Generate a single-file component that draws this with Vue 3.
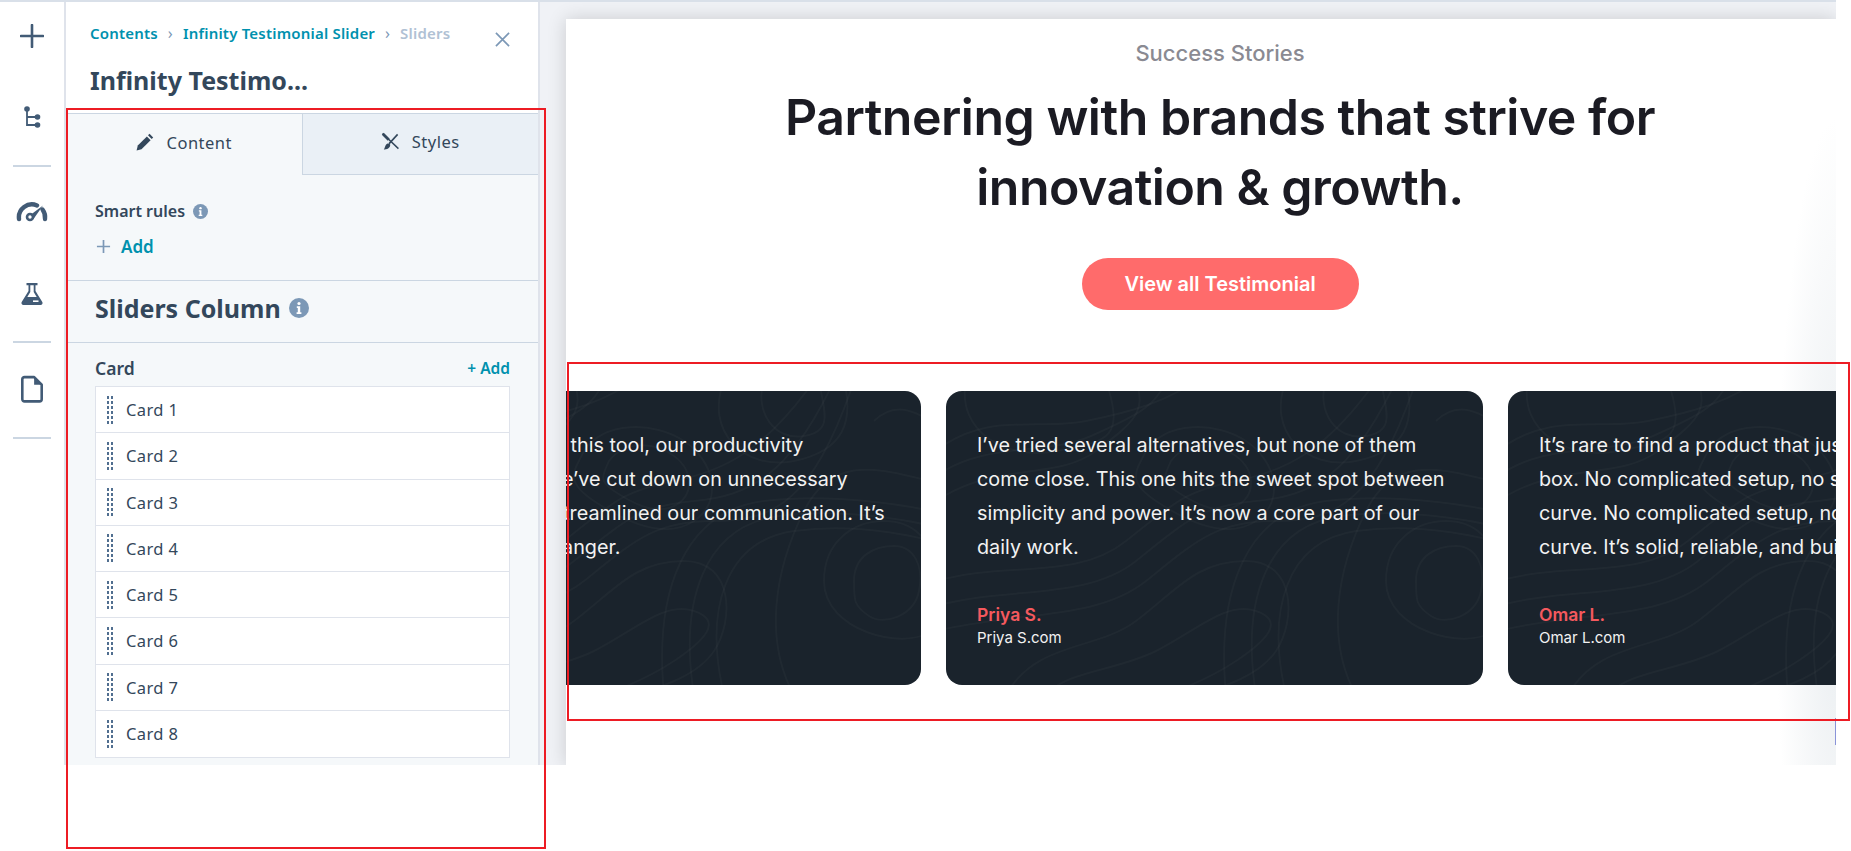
<template>
  <div class="page">
    <div class="workspace">
      <aside class="rail">
        <svg class="rail-icon" viewBox="0 0 24 24"><path d="M12 1v22M1 12h22" fill="none" stroke="#425b76" stroke-width="2.6" stroke-linecap="round" /></svg>
        <svg class="rail-icon tree" viewBox="0 0 24 24">
          <path d="M7 2v17h10M7 11h10" fill="none" stroke="#425b76" stroke-width="1.8" />
          <circle cx="7" cy="3" r="2.8" fill="#425b76" />
          <circle cx="17.5" cy="11" r="2.8" fill="#425b76" />
          <circle cx="17.5" cy="19" r="2.8" fill="#425b76" />
        </svg>
        <div class="rail-line"></div>
        <svg class="rail-icon gauge" viewBox="0 0 32 24">
          <path d="M3 19A13 13 0 0 1 21 5.500" fill="none" stroke="#425b76" stroke-width="4.400" stroke-linecap="round" />
          <path d="M26.500 9.500A13 13 0 0 1 29 19" fill="none" stroke="#425b76" stroke-width="4.400" stroke-linecap="round" />
          <circle cx="14" cy="17" r="3" fill="none" stroke="#425b76" stroke-width="2.600" />
          <path d="M15 14.500 27 5.500 17.500 19z" fill="#425b76" />
        </svg>
        <svg class="rail-icon flask" viewBox="0 0 24 24">
          <path d="M6.500 1h11v2.200h-2V9l6.800 11a2 2 0 0 1-1.800 3H3.500a2 2 0 0 1-1.800-3L8.500 9V3.200h-2z" fill="#425b76" />
          <path d="M10.300 3.200V10l-3 5h9.400l-3-5V3.200z" fill="#fff" />
          <rect x="13" y="18.400" width="5.500" height="1.600" fill="#fff" />
        </svg>
        <div class="rail-line"></div>
        <svg class="rail-icon file" viewBox="0 0 24 26">
          <path d="M5 2h9l7 7v13.500a2 2 0 0 1-2 2H5a2 2 0 0 1-2-2V4a2 2 0 0 1 2-2z" fill="none" stroke="#425b76" stroke-width="2.400" stroke-linejoin="round" />
          <path d="M14 2v7h7z" fill="#425b76" />
        </svg>
        <div class="rail-line"></div>
      </aside>

      <section class="panel">
        <header class="panel-head">
          <div class="crumbs">
            <span class="crumb">Contents</span>
            <span class="chev">›</span>
            <span class="crumb">Infinity Testimonial Slider</span>
            <span class="chev">›</span>
            <span class="crumb off">Sliders</span>
            <svg class="close" viewBox="0 0 16 16"><path d="M1 1l14 14M15 1 1 15" stroke="#7c98b6" stroke-width="1.800" /></svg>
          </div>
          <h2 class="panel-title">Infinity Testimo...</h2>
        </header>

        <div class="tabs">
          <div class="tab active">
            <svg class="tab-icon" viewBox="0 0 24 24">
              <path d="M2 22l1.500-6.200L15 4.300 19.700 9 8.200 20.500z" fill="#33475b" />
              <path d="M16.400 2.900 18.300 1 23 5.700l-1.900 1.900z" fill="#33475b" />
            </svg>
            <span>Content</span>
          </div>
          <div class="tab">
            <svg class="tab-icon" viewBox="0 0 24 24">
              <path d="M2 2l20 19" stroke="#33475b" stroke-width="1.800" fill="none" />
              <path d="M1 3.500 3.500 1 11 8.500 8.500 11z" fill="#33475b" />
              <path d="M21 3 10 15" stroke="#33475b" stroke-width="2" fill="none" />
              <path d="M11.500 15.500c.8 3.500-2.500 7-8 6.500 1.800-1.500 1-5 4.500-7.500z" fill="#33475b" />
            </svg>
            <span>Styles</span>
          </div>
        </div>

        <div class="smart">
          <div class="smart-label">
            <span>Smart rules</span>
            <svg class="info" viewBox="0 0 20 20">
              <circle cx="10" cy="10" r="10" fill="#7c98b6" />
              <circle cx="10" cy="5.500" r="1.600" fill="#fff" />
              <path d="M7.800 8.300h3.400v6h1.200v1.600H7.600v-1.600h1.200V9.900h-1z" fill="#fff" />
            </svg>
          </div>
          <div class="smart-add">
            <svg class="add-plus" viewBox="0 0 16 16"><path d="M8 1v14M1 8h14" stroke="#7c98b6" stroke-width="1.800" /></svg>
            <span>Add</span>
          </div>
        </div>

        <div class="column-head">
          <span>Sliders Column</span>
          <svg class="info big" viewBox="0 0 20 20">
            <circle cx="10" cy="10" r="10" fill="#7c98b6" />
            <circle cx="10" cy="5.500" r="1.600" fill="#fff" />
            <path d="M7.800 8.300h3.400v6h1.200v1.600H7.600v-1.600h1.200V9.900h-1z" fill="#fff" />
          </svg>
        </div>

        <div class="cards-box">
          <div class="cards-head">
            <span class="cards-label">Card</span>
            <span class="cards-add">+ Add</span>
          </div>
          <ul class="card-list">
            <li v-for="n in 8" :key="n" class="card-row">
              <span class="grip"><i v-for="d in 12" :key="d"></i></span>
              <span>Card {{ n }}</span>
            </li>
          </ul>
        </div>
      </section>

      <main class="canvas">
        <div class="preview">
          <div class="preview-inner">
            <p class="eyebrow">Success Stories</p>
            <h1 class="headline">Partnering with brands that strive for<br />innovation &amp; growth.</h1>
            <a class="cta">View all Testimonial</a>
            <div class="track">
              <article v-for="t in testimonials" :key="t.name" class="quote">
                <svg class="contours" viewBox="0 0 537 294" preserveAspectRatio="none">
                  <path v-for="(d, i) in contours" :key="i" :d="d" />
                </svg>
                <div class="quote-body">
                  <p class="quote-text"><span v-for="l in t.lines" :key="l" class="quote-line">{{ l }}</span></p>
                  <p class="quote-name">{{ t.name }}</p>
                  <p class="quote-site">{{ t.site }}</p>
                </div>
              </article>
            </div>
          </div>
          <div class="edge-mark"></div>
        </div>
      </main>
    </div>

    <div class="mark mark-panel"></div>
    <div class="mark mark-slider"></div>
  </div>
</template>

<script setup>
const testimonials = [
  {
    name: 'Daniel R.',
    site: 'Daniel R.com',
    lines: [
      'Since shifting to this tool, our productivity',
      'has risen and we’ve cut down on unnecessary',
      'meetings, and streamlined our communication. It’s',
      'a total game-changer.',
    ],
  },
  {
    name: 'Priya S.',
    site: 'Priya S.com',
    lines: [
      'I’ve tried several alternatives, but none of them',
      'come close. This one hits the sweet spot between',
      'simplicity and power. It’s now a core part of our',
      'daily work.',
    ],
  },
  {
    name: 'Omar L.',
    site: 'Omar L.com',
    lines: [
      'It’s rare to find a product that just works out of the',
      'box. No complicated setup, no steep learning',
      'curve. No complicated setup, no steep learning',
      'curve. It’s solid, reliable, and built to last.',
    ],
  },
]

const contours = [
  'M-10 60C40 20 90 40 140 30S220 10 250 -10',
  'M-10 110C50 70 110 90 150 60S200 20 190 -10',
  'M-10 85C40 50 100 65 145 45S210 15 220 -10',
  'M20 -10C10 40 60 70 110 60S180 50 160 -10',
  'M-10 190C60 170 130 190 180 150S240 100 290 90S380 60 430 -10',
  'M-10 240C70 220 150 230 200 190S270 130 330 130S430 110 470 -10',
  'M-10 215C60 195 140 210 190 170S255 115 310 110S405 85 450 -10',
  'M60 304C90 250 150 260 190 230S250 170 300 170S350 230 330 260S260 300 250 304',
  'M100 304C120 280 170 280 210 260S280 210 310 220S320 250 290 270S230 300 220 304',
  'M340 -10C320 40 360 80 410 70S470 30 460 -10',
  'M380 -10C370 20 390 50 420 45S440 20 435 -10',
  'M280 304C270 200 300 120 380 110S547 120 547 120',
  'M340 304C320 220 340 150 410 140S547 150 547 150',
  'M310 304C295 210 320 135 395 125S547 135 547 135',
  'M440 190C440 150 470 130 500 130S547 150 547 170V240C520 260 440 240 440 190Z',
  'M470 190C470 165 490 155 510 155S540 175 535 200S500 235 485 225S470 210 470 190Z',
  'M410 304C380 250 390 180 420 120S500 80 547 90',
  'M200 60C220 30 270 30 300 50S340 110 310 130S240 130 210 110S190 80 200 60Z',
  'M225 70C240 50 270 50 290 65S310 105 290 115S245 110 230 100S218 85 225 70Z',
  'M490 30C510 10 530 20 547 30',
]
</script>

<style>
body {
  background: #fff;
}
</style>

<style scoped>
.page {
  position: relative;
  width: 1851px;
  height: 851px;
  overflow: hidden;
  background: #fff;
  font-family: "Noto Sans", Arial, sans-serif;
  color: #33475b;
}

.workspace {
  width: 1836px;
  height: 765px;
  display: flex;
  border-top: 2px solid #d9e0e9;
  box-sizing: border-box;
}

/* left icon rail */
.rail {
  width: 64px;
  flex: none;
  display: flex;
  flex-direction: column;
  align-items: center;
  padding-top: 22px;
  box-sizing: border-box;
}

.rail-icon {
  width: 24px;
  height: 24px;
  flex: none;
}

.rail-icon.tree {
  margin-top: 58px;
}

.rail-icon.gauge {
  width: 32px;
  margin-top: -2px;
  margin-bottom: 2px;
}

.rail-icon.flask {
  margin-top: 56px;
}

.rail-icon.file {
  width: 26px;
  height: 28px;
  margin: -3px 0 -1px;
}

.rail-line {
  width: 38px;
  height: 2px;
  background: #cbd6e2;
  margin: 35px 0;
  flex: none;
}

/* editor panel */
.panel {
  width: 476px;
  flex: none;
  box-sizing: border-box;
  border-left: 2px solid #dfe3eb;
  border-right: 2px solid #dfe3eb;
  background: #f5f8fa;
  display: flex;
  flex-direction: column;
}

.panel-head {
  height: 111px;
  flex: none;
  background: #fff;
  padding: 21px 29px 0 24px;
  box-sizing: border-box;
}

.crumbs {
  position: relative;
  display: flex;
  align-items: center;
  height: 20px;
  font-size: 15px;
  letter-spacing: 0.2px;
  font-weight: 600;
  color: #0091ae;
}

.chev {
  width: 25px;
  text-align: center;
  color: #7c98b6;
  font-weight: 400;
  font-size: 16px;
}

.crumb.off {
  color: #b0c1d4;
}

.close {
  position: absolute;
  right: -1px;
  top: 9px;
  width: 15px;
  height: 15px;
}

.panel-title {
  margin: 21px 0 0;
  font-size: 25px;
  line-height: 32px;
  font-weight: 700;
  color: #33475b;
}

.tabs {
  display: flex;
  height: 62px;
  flex: none;
  border-top: 1px solid #cbd6e2;
  box-sizing: border-box;
}

.tab {
  flex: 1;
  display: flex;
  align-items: center;
  justify-content: center;
  gap: 12px;
  font-size: 16.500px;
  letter-spacing: 0.5px;
  background: #eaf0f6;
  border-bottom: 1px solid #cbd6e2;
  border-left: 1px solid #cbd6e2;
  padding-bottom: 5px;
  box-sizing: border-box;
}

.tab.active {
  background: #f5f8fa;
  border: none;
}

.tab-icon {
  width: 19px;
  height: 19px;
}

.smart {
  height: 106px;
  flex: none;
  padding: 26px 29px 0;
  box-sizing: border-box;
  border-bottom: 1px solid #cbd6e2;
}

.smart-label {
  display: flex;
  align-items: center;
  gap: 8px;
  height: 20px;
  font-size: 16px;
  font-weight: 600;
}

.info {
  width: 15px;
  height: 15px;
}

.info.big {
  width: 20px;
  height: 20px;
}

.smart-add {
  display: flex;
  align-items: center;
  gap: 10px;
  height: 20px;
  margin-top: 15px;
  padding-left: 1px;
  font-size: 17px;
  font-weight: 600;
  color: #0091ae;
}

.add-plus {
  width: 15px;
  height: 15px;
}

.column-head {
  height: 62px;
  flex: none;
  display: flex;
  align-items: center;
  gap: 8px;
  padding: 0 29px 8px;
  box-sizing: border-box;
  border-bottom: 1px solid #cbd6e2;
  font-size: 25px;
  font-weight: 700;
}

.cards-box {
  padding: 15px 28px 0 29px;
}

.cards-head {
  display: flex;
  justify-content: space-between;
  align-items: center;
  height: 20px;
  margin-bottom: 8px;
}

.cards-label {
  font-size: 17.500px;
  font-weight: 600;
}

.cards-add {
  font-size: 15.500px;
  font-weight: 600;
  color: #0091ae;
}

.card-list {
  list-style: none;
  margin: 0;
  padding: 0;
  background: #fff;
  border: 1px solid #dfe3eb;
}

.card-row {
  height: 46.25px;
  box-sizing: border-box;
  display: flex;
  align-items: center;
  gap: 13px;
  padding-left: 11px;
  font-size: 16.500px;
  letter-spacing: 0.4px;
  border-bottom: 1px solid #dfe3eb;
}

.card-row:last-child {
  border-bottom: none;
}

.grip {
  width: 6px;
  display: grid;
  grid-template-columns: 2px 2px;
  column-gap: 2px;
  row-gap: 2px;
}

.grip i {
  width: 2px;
  height: 3px;
  background: #516f90;
}

/* page preview */
.canvas {
  flex: 1;
  min-width: 0;
  background: #f0f2f6;
  padding: 17px 0 0 26px;
  overflow: hidden;
}

.preview {
  position: relative;
  height: 100%;
  overflow: hidden;
  background: radial-gradient(60px 460px at 100% 75%, #e9edf0, #fff);
  box-shadow: 0 0 18px rgba(0, 0, 0, 0.16);
  font-family: Inter, "Liberation Sans", sans-serif;
}

.preview-inner {
  width: 1308px;
  display: flex;
  flex-direction: column;
  align-items: center;
}

.eyebrow {
  margin: 19px 0 0;
  font-size: 22px;
  line-height: 30px;
  font-weight: 500;
  color: #8a8a92;
}

.headline {
  margin: 14px 0 0;
  text-align: center;
  font-size: 50px;
  line-height: 70px;
  font-weight: 600;
  letter-spacing: -0.5px;
  color: #1b1b23;
}

.cta {
  margin-top: 36px;
  width: 277px;
  height: 52px;
  border-radius: 26px;
  background: #ff6b6b;
  color: #fff;
  font-size: 20px;
  font-weight: 600;
  display: flex;
  align-items: center;
  justify-content: center;
}

.track {
  display: flex;
  gap: 25px;
  align-self: flex-start;
  margin: 81px 0 0 -182px;
}

.quote {
  position: relative;
  width: 537px;
  height: 294px;
  flex: none;
  border-radius: 16px;
  overflow: hidden;
  background: #1a232c;
}

.contours {
  position: absolute;
  inset: 0;
  width: 100%;
  height: 100%;
  fill: none;
  stroke: rgba(255, 245, 245, 0.026);
  stroke-width: 2;
}

.quote-body {
  position: relative;
  padding: 37px 31px 0;
}

.quote-text {
  margin: 0;
  font-size: 19.800px;
  line-height: 34px;
  color: #f2f2f2;
}

.quote-line {
  display: block;
  white-space: nowrap;
}

.quote-name {
  margin: 39px 0 0;
  font-size: 17.500px;
  line-height: 24px;
  font-weight: 600;
  color: #f5595e;
}

.quote-site {
  margin: 0;
  font-size: 15px;
  line-height: 22px;
  color: #f2f2f2;
}

.edge-mark {
  position: absolute;
  right: 0;
  top: 699px;
  width: 1px;
  height: 27px;
  background: #8a94d8;
}

/* red annotation boxes over the screenshot */
.mark {
  position: absolute;
  border: 2px solid #ed1c24;
  box-sizing: border-box;
  pointer-events: none;
}

.mark-panel {
  left: 66px;
  top: 108px;
  width: 480px;
  height: 741px;
}

.mark-slider {
  left: 567px;
  top: 362px;
  width: 1283px;
  height: 359px;
}
</style>
